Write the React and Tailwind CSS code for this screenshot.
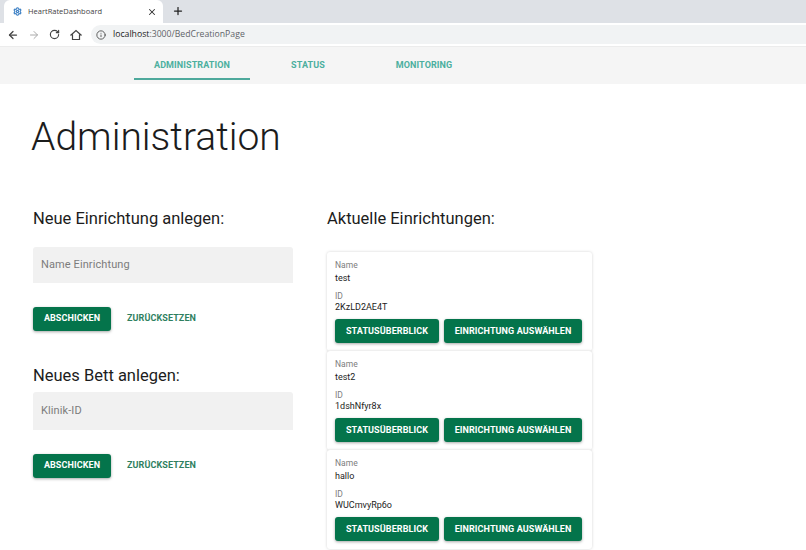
import React from "react";
import { ArrowLeft, ArrowRight, RotateCw, Info, X, Plus, Settings } from "lucide-react";

const Green = ({ children, className = "" }) => (
  <button className={`h-6 bg-[#04744b] text-white rounded-[3px] font-bold text-[9px] tracking-[0.1px] shadow-[0_1px_3px_rgba(0,0,0,0.35)] flex items-center justify-center ${className}`}>{children}</button>
);

const Form = ({ title, placeholder, fieldCls, btnCls }) => (
  <div>
    <h2 className="text-[16.5px] leading-5 text-[#1c1c1c]">{title}</h2>
    <div className={`w-[260px] bg-[#f1f1f1] rounded-t-[3px] flex items-center pl-2 text-[11px] tracking-[0.1px] text-[#7c7c7c] ${fieldCls}`}>{placeholder}</div>
    <div className={`flex items-center ${btnCls}`}>
      <Green className="w-[78px]">ABSCHICKEN</Green>
      <span className="ml-4 text-[9px] font-bold text-[#2f7f5f] tracking-[0.1px]">ZURÜCKSETZEN</span>
    </div>
  </div>
);

const Card = ({ name, id }) => (
  <div className="w-[265px] h-[99px] bg-white rounded-[3px] shadow-[0_0_3px_rgba(0,0,0,0.18)] px-2 pt-[7px] text-[9px] leading-3 text-[#1d1d1d] shrink-0">
    <div className="text-[8.5px] text-[#7d7d7d]">Name</div>
    <div className="mt-[1px]">{name}</div>
    <div className="mt-[6px] text-[8.5px] text-[#7d7d7d]">ID</div>
    <div className="-mt-[1px]">{id}</div>
    <div className="flex gap-[5px] mt-[6px]">
      <Green className="w-[104px]">STATUSÜBERBLICK</Green>
      <Green className="w-[138px]">EINRICHTUNG AUSWÄHLEN</Green>
    </div>
  </div>
);

const Tab = ({ children, active }) => (
  <div className={`w-[116px] h-[33px] pt-[7px] flex items-center justify-center text-[9px] font-bold tracking-[0.1px] text-[#4baf9e] ${active ? "border-b-2 border-[#4ea99c]" : "pb-[2px]"}`}>{children}</div>
);

export default function App() {
  return (
    <div className="w-[806px] h-[550px] overflow-hidden bg-white font-['Roboto',sans-serif]">
      <div className="h-[23px] bg-[#dee1e6] flex">
        <div className="w-[159px] h-[23px] bg-white rounded-t-[6px] ml-[4px] flex items-center pl-[9px] pr-[6px]">
          <Settings className="w-[9px] h-[9px] text-[#3b7fc4]" strokeWidth={3} />
          <span className="ml-[6px] text-[7.5px] text-[#444] font-['Open_Sans',sans-serif]">HeartRateDashboard</span>
          <X className="ml-auto w-[10px] h-[10px] text-[#333]" strokeWidth={2.5} />
        </div>
        <Plus className="ml-[9px] mt-[5px] w-[12px] h-[12px] text-[#222]" strokeWidth={2.5} />
      </div>
      <div className="h-[23px] bg-white flex items-center">
        <ArrowLeft className="ml-[7px] w-[12px] h-[12px] text-[#444]" strokeWidth={2.5} />
        <ArrowRight className="ml-[9px] w-[12px] h-[12px] text-[#aaa]" strokeWidth={2} />
        <RotateCw className="ml-[9px] w-[11px] h-[11px] text-[#444]" strokeWidth={2.5} />
        <svg viewBox="0 0 24 24" className="ml-[10px] w-[12px] h-[12px]" fill="none" stroke="#444" strokeWidth="2.4" strokeLinejoin="miter"><path d="M2 12L12 3l10 9h-3v9H5v-9z" /></svg>
        <div className="ml-[9px] grow h-[19px] bg-[#f1f3f4] rounded-l-full flex items-center pl-[5px]">
          <Info className="w-[10px] h-[10px] text-[#444]" strokeWidth={2} />
          <span className="ml-[7px] text-[8.7px] text-[#5f6368] font-['Open_Sans',sans-serif]"><span className="text-[#222]">localhost</span>:3000/BedCreationPage</span>
        </div>
      </div>
      <div className="h-[38px] bg-[#f5f5f5] border-t border-[#ececec] flex pl-[134px]">
        <Tab active>ADMINISTRATION</Tab>
        <Tab>STATUS</Tab>
        <Tab>MONITORING</Tab>
      </div>
      <h1 className="ml-[31px] mt-[27px] text-[39px] leading-[52px] font-light text-[#1c1c1c]">Administration</h1>
      <div className="flex mt-[46px] ml-[33px]">
        <div className="w-[294px]">
          <Form title="Neue Einrichtung anlegen:" placeholder="Name Einrichtung" fieldCls="mt-[18px] h-[36px]" btnCls="mt-6" />
          <div className="mt-[35px]">
            <Form title="Neues Bett anlegen:" placeholder="Klinik-ID" fieldCls="mt-[6px] h-[38px]" btnCls="mt-6" />
          </div>
        </div>
        <div>
          <h2 className="text-[16.5px] leading-5 text-[#1c1c1c]">Aktuelle Einrichtungen:</h2>
          <div className="mt-[23px] flex flex-col">
            <Card name="test" id="2KzLD2AE4T" />
            <Card name="test2" id="1dshNfyr8x" />
            <Card name="hallo" id="WUCmvyRp6o" />
          </div>
        </div>
      </div>
    </div>
  );
}
